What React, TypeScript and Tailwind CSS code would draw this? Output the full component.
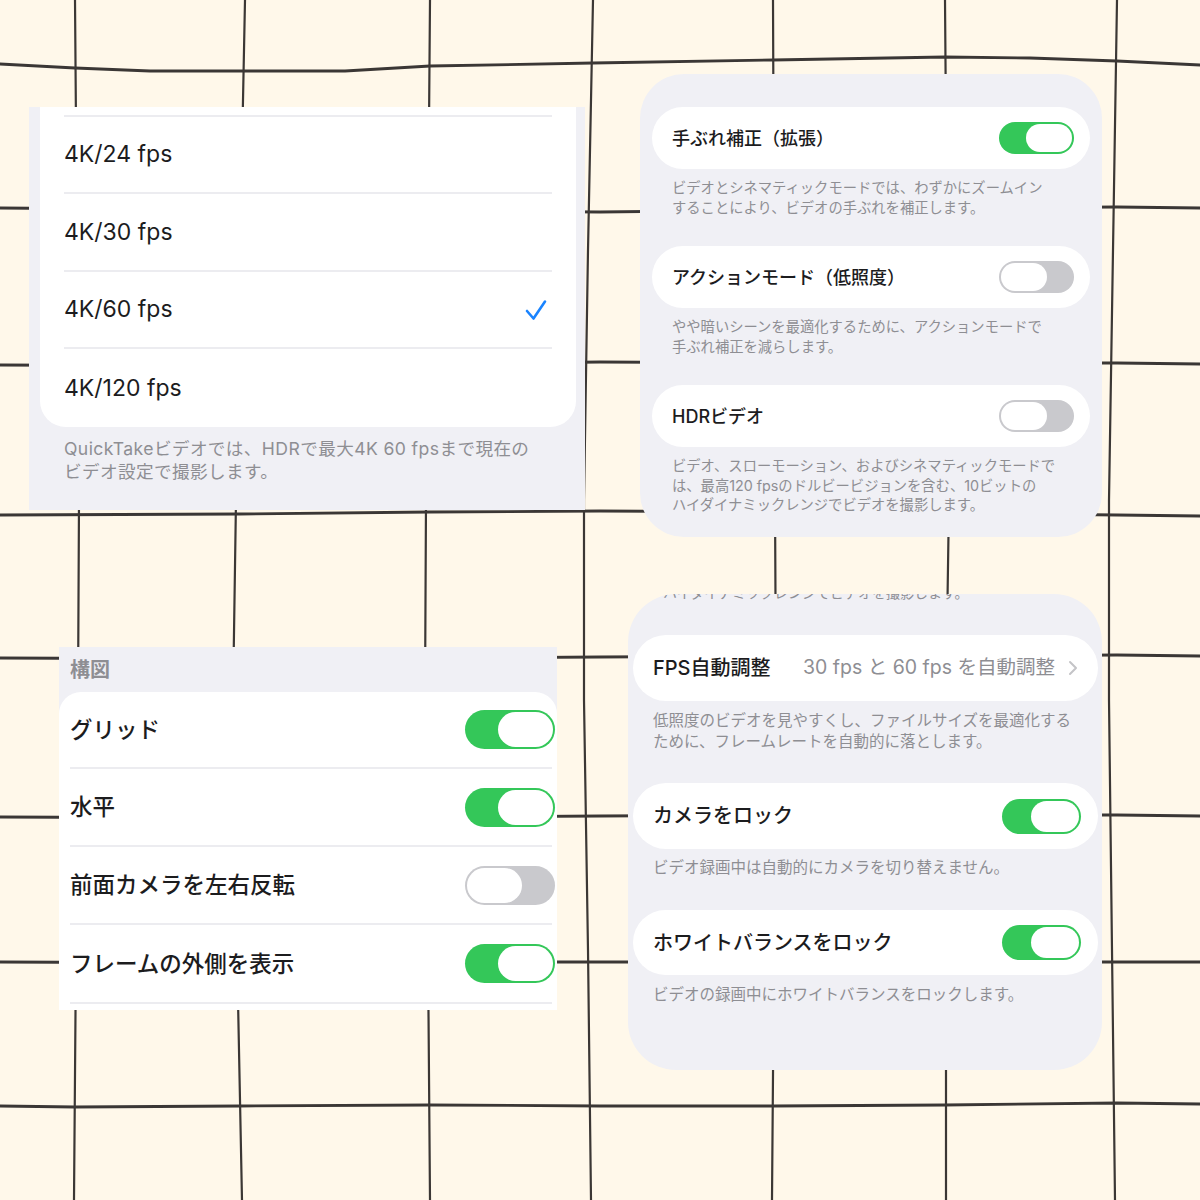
import React from 'react'

type ToggleProps = { on: boolean; w: number; h: number }

// iOS 26 style switch: wide track, pill knob
function Toggle({ on, w, h }: ToggleProps) {
    const knobW = Math.round(w * 0.61)
    return (
        <div
            className={on ? 'relative shrink-0 rounded-full bg-[#34c759]' : 'relative shrink-0 rounded-full bg-[#c9c9cd]'}
            style={{ width: w, height: h }}
        >
            <div
                className={on ? 'absolute top-[2px] right-[2px] rounded-full bg-white' : 'absolute top-[2px] left-[2px] rounded-full bg-white'}
                style={{ width: knobW, height: h - 4 }}
            />
        </div>
    )
}

function GridLines() {
    const v = [
        '75,0 77,250 79,500 78,700 76,950 74,1200',
        '245,0 240,250 236,500 233,700 237,950 242,1200',
        '430,0 428,250 426,500 425,700 428,950 430,1200',
        '593,0 588,250 584,500 584,700 588,950 591,1200',
        '773,0 774,250 775,500 776,700 774,950 772,1200',
        '945,0 947,250 949,500 946,700 946,950 946,1200',
        '1117,0 1113,250 1109,500 1109,700 1112,950 1115,1200',
    ]
    const h = [
        '0,64 75,68 150,71 345,71 430,66 593,63 773,60 945,57 1030,58 1117,61 1200,65',
        '0,208 240,210 430,211 600,212 773,210 945,208 1117,207 1200,208',
        '0,365 240,366 430,364 600,362 773,363 945,363 1117,363 1200,364',
        '0,515 240,514 430,512 600,511 773,512 945,513 1117,515 1200,516',
        '0,658 240,659 430,658 600,657 773,656 945,656 1117,655 1200,656',
        '0,817 240,818 430,817 600,816 773,815 945,815 1117,815 1200,816',
        '0,962 240,963 430,962 600,962 773,962 945,962 1117,962 1200,962',
        '0,1106 75,1107 240,1106 430,1105 600,1106 773,1106 945,1105 1117,1103 1200,1104',
    ]
    return (
        <svg className="absolute inset-0 h-[1200px] w-[1200px]" viewBox="0 0 1200 1200" fill="none">
            {[...v, ...h].map((pts, i) => (
                <polyline
                    key={i}
                    points={pts}
                    stroke="#3b3735"
                    strokeWidth={i < v.length ? 2.2 : 2.8}
                    strokeLinecap="round"
                    strokeLinejoin="round"
                />
            ))}
        </svg>
    )
}

function Check() {
    return (
        <svg width="24" height="24" viewBox="0 0 24 24" fill="none">
            <polyline points="3,13 9.5,20.5 21,3.5" stroke="#1a84ff" strokeWidth="2.6" strokeLinecap="round" strokeLinejoin="round" />
        </svg>
    )
}

function Chevron() {
    return (
        <svg width="10" height="16" viewBox="0 0 10 16" fill="none">
            <polyline points="2,2 8,8 2,14" stroke="#c4c4c7" strokeWidth="2" strokeLinecap="round" strokeLinejoin="round" />
        </svg>
    )
}

// top-left: frame rate list
function FrameRatePanel() {
    const rows = [
        { label: '4K/24 fps', h: 'h-[77px]' },
        { label: '4K/30 fps', h: 'h-[78px]' },
        { label: '4K/60 fps', h: 'h-[77px]', checked: true },
        { label: '4K/120 fps', h: 'h-[78px]' },
    ]
    return (
        <div className="absolute left-[29px] top-[107px] h-[403px] w-[556px] bg-[#f0f0f5] pl-[11px] pr-[9px]">
            <div className="rounded-b-[26px] bg-white px-[24px]">
                <div className="h-[10px] border-b-2 border-[#ececf0]" />
                {rows.map((r, i) => (
                    <div
                        key={r.label}
                        className={`${r.h} flex items-center justify-between ${i < rows.length - 1 ? 'border-b-2 border-[#ececf0]' : ''}`}
                    >
                        <span className="text-[23px] text-[#1c1c1e]">{r.label}</span>
                        {r.checked && (
                            <span className="mr-[4px]">
                                <Check />
                            </span>
                        )}
                    </div>
                ))}
            </div>
            <p className="mt-[10px] whitespace-nowrap px-[24px] text-[17.6px] leading-[23px] tracking-[0.4px] text-[#8e8e93]">
                QuickTakeビデオでは、HDRで最大4K 60 fpsまで現在の
                <br />
                ビデオ設定で撮影します。
            </p>
        </div>
    )
}

// top-right: stabilization / HDR
function StabilizationPanel() {
    const items = [
        {
            title: '手ぶれ補正（拡張）',
            on: true,
            desc: ['ビデオとシネマティックモードでは、わずかにズームイン', 'することにより、ビデオの手ぶれを補正します。'],
        },
        {
            title: 'アクションモード（低照度）',
            on: false,
            desc: ['やや暗いシーンを最適化するために、アクションモードで', '手ぶれ補正を減らします。'],
        },
        {
            title: 'HDRビデオ',
            on: false,
            desc: [
                'ビデオ、スローモーション、およびシネマティックモードで',
                'は、最高120 fpsのドルビービジョンを含む、10ビットの',
                'ハイダイナミックレンジでビデオを撮影します。',
            ],
        },
    ]
    return (
        <div className="absolute left-[640px] top-[74px] flex h-[463px] w-[462px] flex-col gap-[29px] rounded-[44px] bg-[#f0f0f5] px-[12px] pt-[33px]">
            {items.map(it => (
                <div key={it.title}>
                    <div className="flex h-[62px] items-center justify-between rounded-full bg-white pl-[20px] pr-[16px]">
                        <span className="text-[18px] font-medium text-[#1c1c1e]">{it.title}</span>
                        <Toggle on={it.on} w={75} h={32} />
                    </div>
                    <p className="mt-[9px] whitespace-nowrap px-[20px] text-[14.3px] leading-[19.5px] text-[#8e8e93]">
                        {it.desc.map((l, i) => (
                            <span key={i} className="block">
                                {l}
                            </span>
                        ))}
                    </p>
                </div>
            ))}
        </div>
    )
}

// bottom-left: composition
function CompositionPanel() {
    const rows = [
        { label: 'グリッド', on: true, h: 'h-[75px]' },
        { label: '水平', on: true, h: 'h-[76px]' },
        { label: '前面カメラを左右反転', on: false, h: 'h-[76px]' },
        { label: 'フレームの外側を表示', on: true, h: 'h-[77px]' },
    ]
    return (
        <div className="absolute left-[59px] top-[647px] flex h-[363px] w-[498px] flex-col bg-[#f0f0f5]">
            <div className="flex h-[45px] shrink-0 items-center px-[11px]">
                <span className="text-[20px] font-semibold text-[#8e8e93]">構図</span>
            </div>
            <div className="flex-1 rounded-t-[22px] bg-white pl-[11px] pr-[2px]">
                {rows.map(r => (
                    <div key={r.label} className={`${r.h} flex items-center justify-between`}>
                        <span className="text-[22.5px] font-medium text-[#1c1c1e]">{r.label}</span>
                        <Toggle on={r.on} w={90} h={39} />
                    </div>
                )).flatMap((el, i) => [
                    el,
                    <div key={'s' + i} className="mr-[3px] h-[2px] bg-[#ececf0]" />,
                ])}
            </div>
        </div>
    )
}

// bottom-right: fps / locks
function LockPanel() {
    return (
        <div className="absolute left-[628px] top-[594px] flex h-[476px] w-[474px] flex-col overflow-hidden rounded-[48px] bg-[#f0f0f5] pl-[5px] pr-[4px]">
            <p className="-mt-[8px] h-[14px] whitespace-nowrap px-[30px] text-[14px] leading-[14px] text-[#8e8e93]">
                ハイダイナミックレンジでビデオを撮影します。
            </p>
            <div className="mt-[35px] flex h-[66px] items-center rounded-full bg-white pl-[20px] pr-[20px]">
                <span className="text-[20px] font-medium text-[#1c1c1e]">FPS自動調整</span>
                <span className="ml-auto text-[19.5px] text-[#8e8e93]">30 fps と 60 fps を自動調整</span>
                <span className="ml-[13px]">
                    <Chevron />
                </span>
            </div>
            <p className="mt-[9px] whitespace-nowrap px-[20px] text-[15.5px] leading-[21px] text-[#8e8e93]">
                低照度のビデオを見やすくし、ファイルサイズを最適化する
                <br />
                ために、フレームレートを自動的に落とします。
            </p>
            <div className="mt-[31px] flex h-[66px] items-center justify-between rounded-full bg-white pl-[20px] pr-[17px]">
                <span className="text-[20px] font-medium text-[#1c1c1e]">カメラをロック</span>
                <Toggle on w={79} h={35} />
            </div>
            <p className="mt-[8px] whitespace-nowrap px-[20px] text-[15.5px] leading-[21px] text-[#8e8e93]">
                ビデオ録画中は自動的にカメラを切り替えません。
            </p>
            <div className="mt-[32px] flex h-[65px] items-center justify-between rounded-full bg-white pl-[20px] pr-[17px]">
                <span className="text-[20px] font-medium text-[#1c1c1e]">ホワイトバランスをロック</span>
                <Toggle on w={79} h={35} />
            </div>
            <p className="mt-[9px] whitespace-nowrap px-[20px] text-[15.5px] leading-[21px] text-[#8e8e93]">
                ビデオの録画中にホワイトバランスをロックします。
            </p>
        </div>
    )
}

export default function App() {
    return (
        <div className="relative h-[1200px] w-[1200px] overflow-hidden bg-[#fff8ea] font-[family-name:Inter,'Noto_Sans_CJK_JP',sans-serif]">
            <GridLines />
            <FrameRatePanel />
            <StabilizationPanel />
            <CompositionPanel />
            <LockPanel />
        </div>
    )
}
